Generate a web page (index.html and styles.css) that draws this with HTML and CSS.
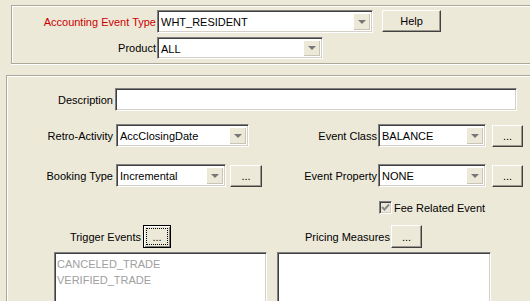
FILE: index.html
```html
<!DOCTYPE html>
<html lang="en">
<head>
    <meta charset="UTF-8">
    <title>Accounting Event</title>
    <link rel="stylesheet" href="styles.css">
</head>
<body>
    <!-- event type / product -->
    <div class="panel top-panel">
        <div class="row r1">
            <label class="lbl lbl-top required">Accounting Event Type</label>
            <div class="combo sunken w-type"><span class="val">WHT_RESIDENT</span><span class="arrow"><i></i></span></div>
            <button class="btn btn-help">Help</button>
        </div>
        <div class="row r2">
            <label class="lbl lbl-top">Product</label>
            <div class="combo sunken w-product"><span class="val">ALL</span><span class="arrow"><i></i></span></div>
        </div>
    </div>

    <!-- event details -->
    <div class="panel main-panel">
        <div class="row desc-row">
            <label class="lbl lbl-desc">Description</label>
            <div class="field sunken"></div>
        </div>

        <div class="row retro-row">
            <label class="lbl lbl-left">Retro-Activity</label>
            <div class="combo sunken w-retro"><span class="val">AccClosingDate</span><span class="arrow"><i></i></span></div>
            <label class="lbl lbl-class">Event Class</label>
            <div class="combo sunken w-right"><span class="val">BALANCE</span><span class="arrow"><i></i></span></div>
            <button class="btn btn-dots">...</button>
        </div>

        <div class="row booking-row">
            <label class="lbl lbl-left">Booking Type</label>
            <div class="combo sunken w-booking"><span class="val">Incremental</span><span class="arrow"><i></i></span></div>
            <button class="btn btn-dots btn-booking">...</button>
            <label class="lbl lbl-prop">Event Property</label>
            <div class="combo sunken w-right"><span class="val">NONE</span><span class="arrow"><i></i></span></div>
            <button class="btn btn-dots">...</button>
        </div>

        <div class="check-row">
            <span class="checkbox sunken">
                <svg width="9" height="9" viewBox="0 0 9 9"><polyline points="1,4 3.5,6.5 8,1.5" fill="none" stroke="#8a8a8a" stroke-width="2"/></svg>
            </span>
            <span class="check-text">Fee Related Event</span>
        </div>

        <div class="row trigger-row">
            <label class="lbl lbl-trigger">Trigger Events</label>
            <button class="btn btn-focus"><span class="focus-ring">...</span></button>
            <label class="lbl lbl-pricing">Pricing Measures</label>
            <button class="btn btn-dots btn-pricing">...</button>
        </div>

        <div class="lists">
            <div class="list sunken list-trigger">
                <div class="item">CANCELED_TRADE</div>
                <div class="item">VERIFIED_TRADE</div>
            </div>
            <div class="list sunken list-pricing"></div>
        </div>
    </div>
</body>
</html>
```

FILE: styles.css
```css
* {
    margin: 0;
    padding: 0;
    box-sizing: border-box;
}

body {
    background: #ece9d8;
    font-family: 'Liberation Sans', Arial, sans-serif;
    font-size: 11px;
    color: #000;
    overflow: hidden;
    width: 530px;
    height: 301px;
}

/* etched group borders (open towards the window edge) */
.panel {
    border: 1px solid #aca899;
    box-shadow: inset 1px 1px 0 #fff, 0 1px 0 #fff;
}

.top-panel {
    margin: 5px 0 0 11px;
    width: 519px;
    height: 59px;
    padding: 4px 0 4px 0;
    border-right: none;
}

.main-panel {
    margin: 11px 0 0 6px;
    width: 524px;
    height: 226px;
    padding-top: 12px;
    border-right: none;
    border-bottom: none;
    overflow: hidden;
}

.row {
    display: flex;
    align-items: center;
}

.r1 { height: 23px; }
.r2 { height: 22px; margin-top: 4px; }

.lbl {
    text-align: right;
    white-space: nowrap;
}

.required { color: #cc0000; }

.lbl-top { width: 145px; padding-right: 1px; }
.lbl-desc { width: 108px; padding-right: 2px; }
.lbl-left { width: 109px; padding-right: 3px; }
.lbl-class { width: 129px; padding-right: 1px; }
.lbl-prop { width: 116px; padding-right: 1px; }
.lbl-trigger { width: 136px; padding-right: 2px; }
.lbl-pricing { width: 220px; text-align: left; padding-left: 134px; }

/* sunken 3d edge */
.sunken {
    border: 1px solid;
    border-color: #808080 #fff #fff #808080;
    box-shadow: inset 1px 1px 0 #404040, inset -1px -1px 0 #d4d0c8;
    background: #fff;
}

.combo {
    display: flex;
    height: 100%;
    padding: 2px;
}

.r1 .combo { height: 23px; }
.r2 .combo { height: 22px; }

.val {
    flex: 1;
    padding-left: 1px;
    line-height: 18px;
    white-space: nowrap;
    overflow: hidden;
}

.arrow {
    width: 17px;
    background: #ece9d8;
    box-shadow: inset 1px 1px 0 #fff, inset -1px -1px 0 #c9c5b5;
    display: flex;
    align-items: center;
    justify-content: center;
}

.arrow i {
    width: 0;
    height: 0;
    border-left: 4px solid transparent;
    border-right: 4px solid transparent;
    border-top: 4px solid #777;
}

.w-type { width: 216px; }
.w-product { width: 166px; }
.w-retro { width: 133px; }
.w-booking { width: 110px; }
.w-right { width: 108px; }

.field {
    width: 402px;
    height: 23px;
}

.desc-row { height: 23px; }
.retro-row { height: 23px; margin-top: 13px; }
.booking-row { height: 23px; margin-top: 17px; }
.retro-row .combo,
.booking-row .combo { height: 23px; }

/* raised buttons */
.btn {
    font-family: inherit;
    font-size: 11px;
    color: #000;
    background: #ece9d8;
    border: 1px solid;
    border-color: #fff #404040 #404040 #fff;
    box-shadow: inset -1px -1px 0 #9d9a8c;
    display: flex;
    align-items: center;
    justify-content: center;
}

.btn-help {
    width: 59px;
    height: 22px;
    margin-left: 9px;
    align-self: flex-start;
}

.btn-dots {
    width: 31px;
    height: 22px;
    margin-left: 6px;
}

.btn-booking {
    width: 32px;
    margin-left: 4px;
}

.check-row {
    display: flex;
    align-items: center;
    margin: 14px 0 0 372px;
    height: 13px;
}

.checkbox {
    width: 13px;
    height: 13px;
    background: #ece9d8;
    display: flex;
    align-items: center;
    justify-content: center;
}

.check-text {
    margin-left: 2px;
    white-space: nowrap;
}

.trigger-row {
    height: 23px;
    margin-top: 11px;
}

.btn-focus {
    width: 28px;
    height: 23px;
    border-color: #000;
    box-shadow: inset 1px 1px 0 #fff, inset -1px -1px 0 #808080;
    padding: 2px;
}

.focus-ring {
    display: flex;
    align-items: center;
    justify-content: center;
    width: 100%;
    height: 100%;
    border: 1px dotted #000;
}

.btn-pricing {
    height: 23px;
    margin-left: 0;
}

.lists {
    display: flex;
    gap: 10px;
    margin: 4px 0 0 47px;
}

.list {
    height: 60px;
    padding: 3px 2px;
}

.list-trigger { width: 213px; }
.list-pricing { width: 214px; }

.item {
    color: #a0a0a0;
    line-height: 16px;
    white-space: nowrap;
}
```
